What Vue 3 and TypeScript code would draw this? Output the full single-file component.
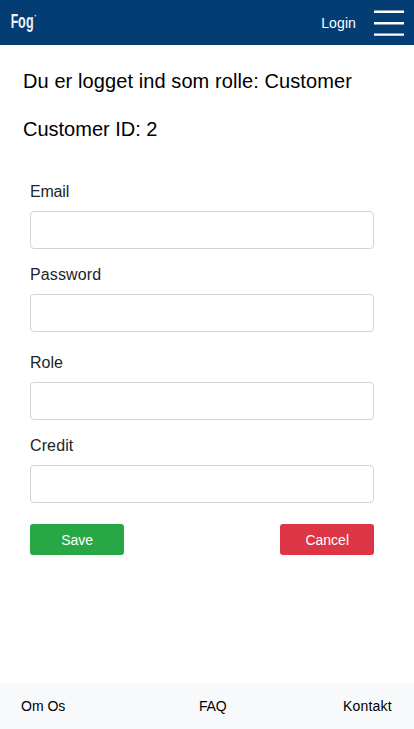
<script setup lang="ts">
import { ref } from 'vue'

interface Field {
  id: string
  label: string
  type: string
}

const role = 'Customer'
const customerId = 2
const fields: Field[] = [
  { id: 'email', label: 'Email', type: 'email' },
  { id: 'password', label: 'Password', type: 'password' },
  { id: 'role', label: 'Role', type: 'text' },
  { id: 'credit', label: 'Credit', type: 'text' },
]
const values = ref<Record<string, string>>({ email: '', password: '', role: '', credit: '' })
</script>

<template>
  <div class="page">
    <header class="topbar">
      <svg class="logo" width="36" height="45" viewBox="0 0 36 45" role="img" aria-label="Fog">
        <g transform="scale(0.6 1)">
          <text class="logo-text" x="1.1" y="27.8">F<tspan class="logo-low" x="13.5">o</tspan><tspan class="logo-low" x="26.6">g</tspan></text>
        </g>
        <circle cx="25.4" cy="15.6" r="0.9" fill="#c3d0de" />
      </svg>
      <a class="login">Login</a>
      <svg class="menu" width="30" height="26" viewBox="0 0 30 26">
        <path d="M0 1.7H30M0 13.2H30M0 24.6H30" stroke="#fff" stroke-width="2.4" />
      </svg>
    </header>
    <main class="content">
      <h1 class="title wide">Du er logget ind som rolle: {{ role }}</h1>
      <h2 class="title">Customer ID: {{ customerId }}</h2>
      <form class="form" @submit.prevent>
        <div v-for="f in fields" :key="f.id" class="field" :class="f.id">
          <label :for="f.id">{{ f.label }}</label>
          <input :id="f.id" v-model="values[f.id]" :type="f.type" />
        </div>
        <div class="actions">
          <button class="btn save" type="submit">Save</button>
          <button class="btn cancel" type="button">Cancel</button>
        </div>
      </form>
    </main>
    <footer class="footer">
      <a class="about">Om Os</a>
      <a class="faq">FAQ</a>
      <a class="contact">Kontakt</a>
    </footer>
  </div>
</template>

<style>
body {
  margin: 0;
  background: #fff;
}
</style>

<style scoped>
.page {
  display: flex;
  flex-direction: column;
  height: 729px;
  overflow: hidden;
  font-family: "Liberation Sans", Arial, sans-serif;
  color: #000;
}
.topbar {
  display: flex;
  align-items: center;
  box-sizing: border-box;
  height: 45px;
  padding: 0 10px;
  background: #043c74;
}
.logo-text {
  font: bold 20.5px "Liberation Sans", Arial, sans-serif;
  fill: #edf2f7;
}
.logo-low {
  font-size: 21px;
}
.login {
  margin-left: auto;
  margin-right: 18px;
  font-size: 14px;
  letter-spacing: 0.1px;
  color: #fff;
}
.content {
  flex: 1;
  padding: 24px 40px 0 23px;
}
.title {
  margin: 0 0 24px;
  font-size: 20px;
  line-height: 24px;
  font-weight: 400;
  white-space: nowrap;
}
.wide {
  letter-spacing: 0.09px;
}
.form {
  padding: 15px 0 0 7px;
}
.field {
  display: flex;
  flex-direction: column;
  gap: 8px;
  margin-bottom: 14px;
}
.field.password {
  margin-bottom: 19px;
}
.field.credit {
  margin-bottom: 21px;
}
.field label {
  font-size: 16px;
  line-height: 23px;
  color: #212529;
}
.field.email label {
  letter-spacing: -0.2px;
}
.field.password label,
.field.credit label {
  letter-spacing: 0.12px;
}
.field input {
  box-sizing: border-box;
  width: 344px;
  height: 38px;
  margin: 0;
  padding: 6px 12px;
  border: 1px solid #ced4da;
  border-radius: 4px;
  font: inherit;
  outline: none;
  background: #fff;
}
.actions {
  display: flex;
  justify-content: space-between;
  box-sizing: border-box;
  width: 344px;
  padding-left: 0.4px;
}
.btn {
  box-sizing: border-box;
  width: 93.6px;
  height: 31px;
  padding: 1px 0 0;
  border: 0;
  border-radius: 3px;
  font: 14px/30px "Liberation Sans", Arial, sans-serif;
  color: #fff;
}
.save {
  background: #28a745;
}
.cancel {
  background: #dc3545;
}
.footer {
  display: grid;
  grid-template-columns: 178px 144px auto;
  align-items: center;
  box-sizing: border-box;
  height: 46px;
  padding: 0 0 0 21px;
  background: #f8f9fa;
  font-size: 14px;
}
.faq {
  letter-spacing: -0.2px;
}
.contact {
  letter-spacing: 0.2px;
}
</style>
